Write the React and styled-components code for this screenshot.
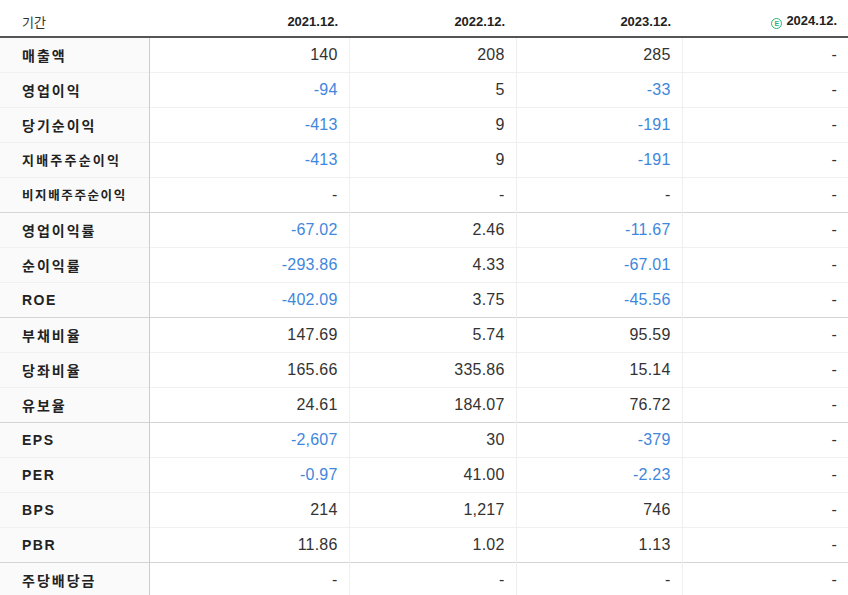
import React from 'react'
import styled, { createGlobalStyle } from 'styled-components'

const Global = createGlobalStyle`
body {
  margin: 0;
  background: #fff;
  font-family: "Liberation Sans", "Noto Sans CJK KR", sans-serif;
  color: #333;
}
`
const Table = styled.table`
width: 848px;
border-collapse: collapse;
table-layout: fixed;
`
const HeadCell = styled.th`
height: 30px;
padding: 6px 11px 0 0;
text-align: right;
font-size: 13px;
font-weight: bold;
color: #222;
border-bottom: 2px solid #555;
white-space: nowrap;
&:first-child {
  text-align: left;
  padding-left: 22px;
  font-weight: normal;
  font-size: 13px;
  color: #333;
}
`
const Row = styled.tr`
height: 35px;
border-bottom: 1px solid ${p => p.$groupEnd ? '#d4d4d4' : '#f0f0f0'};
`
const LabelCell = styled.td`
background: #fafafa;
border-right: 1px solid #ccc;
padding: 0 0 0 22px;
font-weight: bold;
font-size: ${p => p.$size || 14}px;
letter-spacing: ${p => p.$spacing || 2}px;
color: #222;
white-space: nowrap;
overflow: hidden;
`
const ValueCell = styled.td`
text-align: right;
padding: 0 11px 0 0;
font-size: 16px;
letter-spacing: 0.2px;
color: ${p => p.$neg ? '#3f87dd' : '#333'};
border-right: 1px solid #efefef;
&:last-child {
  border-right: none;
}
`
const Estimate = styled.span`
display: inline-flex;
align-items: center;
justify-content: center;
width: 11px;
height: 11px;
box-sizing: border-box;
border: 1.5px solid #2bb673;
border-radius: 50%;
color: #2bb673;
font-size: 7px;
font-weight: bold;
margin-right: 4px;
vertical-align: -1px;
letter-spacing: 0;
`

const rows = [
  ['매출액', ['140', '208', '285', '-']],
  ['영업이익', ['-94', '5', '-33', '-']],
  ['당기순이익', ['-413', '9', '-191', '-']],
  ['지배주주순이익', ['-413', '9', '-191', '-'], 13, 2.2],
  ['비지배주주순이익', ['-', '-', '-', '-'], 12.5, 1.6, true],
  ['영업이익률', ['-67.02', '2.46', '-11.67', '-']],
  ['순이익률', ['-293.86', '4.33', '-67.01', '-']],
  ['ROE', ['-402.09', '3.75', '-45.56', '-'], 14, 1.5, true],
  ['부채비율', ['147.69', '5.74', '95.59', '-']],
  ['당좌비율', ['165.66', '335.86', '15.14', '-']],
  ['유보율', ['24.61', '184.07', '76.72', '-'], 14, 2, true],
  ['EPS', ['-2,607', '30', '-379', '-'], 14, 1.5],
  ['PER', ['-0.97', '41.00', '-2.23', '-'], 14, 1.5],
  ['BPS', ['214', '1,217', '746', '-'], 14, 1.5],
  ['PBR', ['11.86', '1.02', '1.13', '-'], 14, 1.5, true],
  ['주당배당금', ['-', '-', '-', '-']],
]

const App = () => {
  return (
    <>
      <Global />
      <Table>
        <colgroup>
          <col style={{ width: 149 }} />
          <col style={{ width: 200 }} />
          <col style={{ width: 167 }} />
          <col style={{ width: 166 }} />
          <col style={{ width: 166 }} />
        </colgroup>
        <thead>
          <tr>
            <HeadCell>기간</HeadCell>
            <HeadCell>2021.12.</HeadCell>
            <HeadCell>2022.12.</HeadCell>
            <HeadCell>2023.12.</HeadCell>
            <HeadCell><Estimate>E</Estimate>2024.12.</HeadCell>
          </tr>
        </thead>
        <tbody>
          {rows.map(([label, values, size, spacing, groupEnd]) => (
            <Row key={label} $groupEnd={groupEnd}>
              <LabelCell $size={size} $spacing={spacing}>{label}</LabelCell>
              {values.map((v, i) => (
                <ValueCell key={i} $neg={v.startsWith('-') && v !== '-'}>{v}</ValueCell>
              ))}
            </Row>
          ))}
        </tbody>
      </Table>
    </>
  )
}

export default App
